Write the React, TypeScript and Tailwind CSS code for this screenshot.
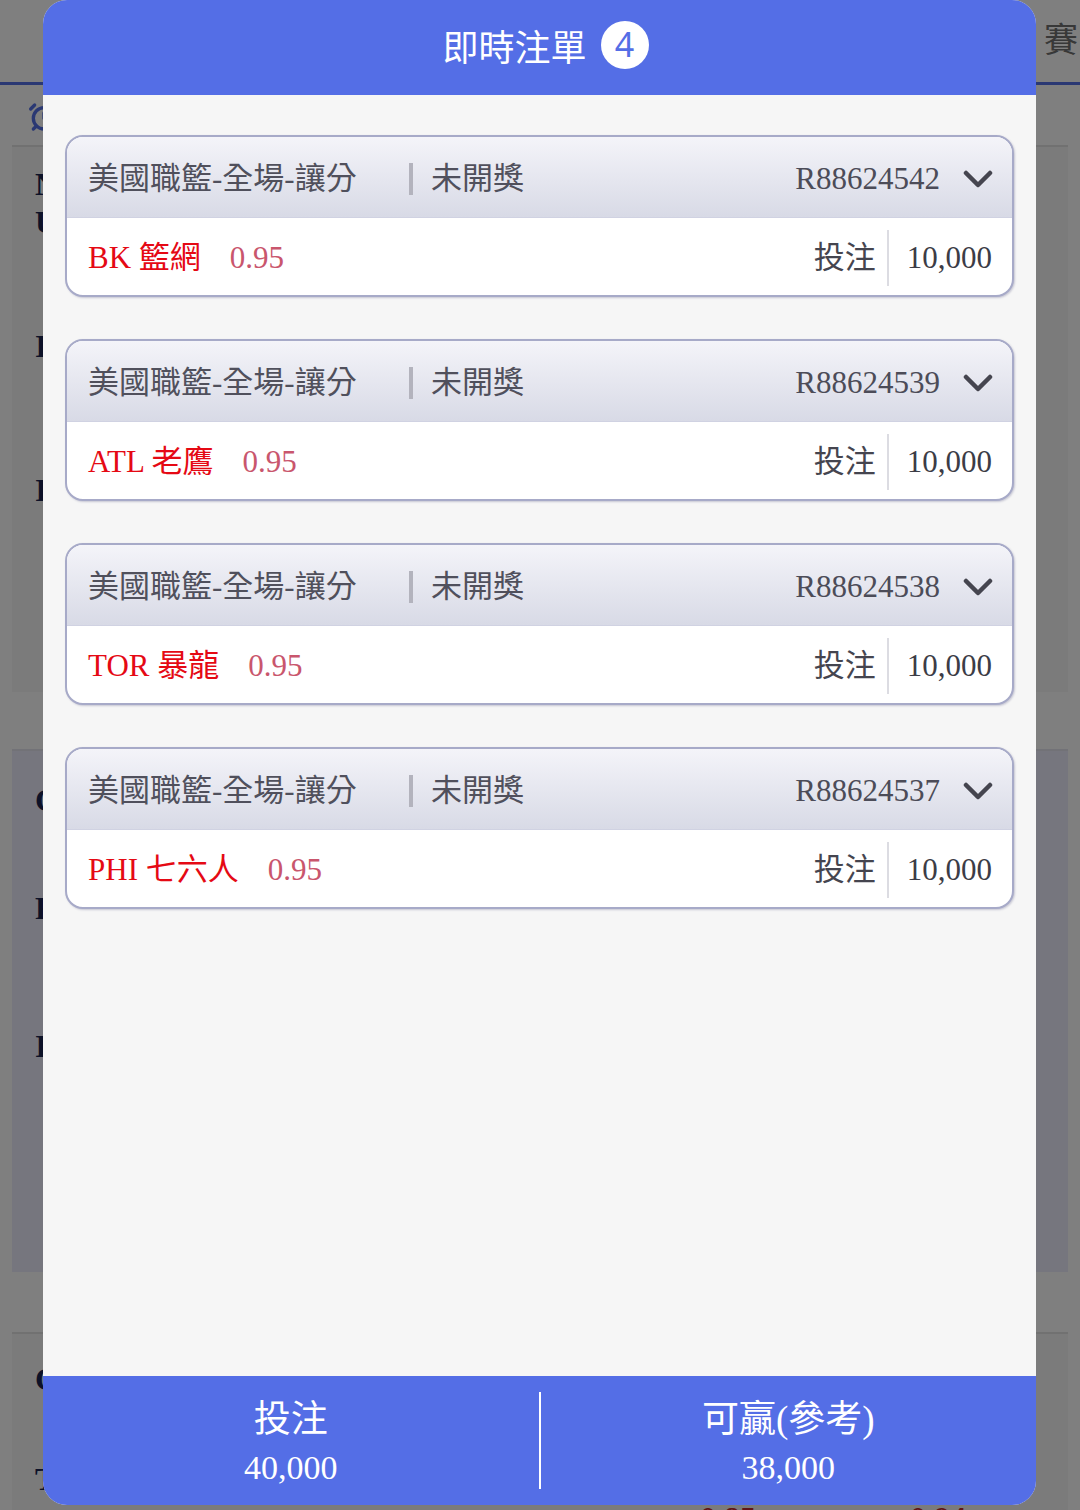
import React from 'react';
import { AlarmClock } from 'lucide-react';

const bets = [
  { id: 'R88624542', team: 'BK 籃網', odds: '0.95' },
  { id: 'R88624539', team: 'ATL 老鷹', odds: '0.95' },
  { id: 'R88624538', team: 'TOR 暴龍', odds: '0.95' },
  { id: 'R88624537', team: 'PHI 七六人', odds: '0.95' },
];

function Chevron() {
  return (
    <svg width="30" height="20" viewBox="0 0 30 20" fill="none">
      <path d="M3 4 L15 16 L27 4" stroke="#45454f" strokeWidth="4.5" strokeLinecap="round" strokeLinejoin="round" />
    </svg>
  );
}

function BetCard({ bet }: { bet: (typeof bets)[number] }) {
  return (
    <div className="rounded-[18px] border-2 border-[#a7aac8] bg-white overflow-hidden shadow-[1px_1px_2px_rgba(60,60,110,0.25)]">
      {/* ticket header */}
      <div className="h-[81px] flex items-center pt-[4px] pl-[21px] pr-[19px] bg-gradient-to-b from-[#f4f4f9] to-[#d8dae6] border-b border-[#d0d2e2] text-[31px] text-[#50505c]">
        <span className="w-[321px]">美國職籃-全場-讓分</span>
        <span className="w-[4px] h-[32px] bg-[#b3b3bd]" />
        <span className="ml-[18px]">未開獎</span>
        <span className="ml-auto text-[#4c4c58]">{bet.id}</span>
        <span className="ml-[23px] flex items-center">
          <Chevron />
        </span>
      </div>
      {/* ticket body */}
      <div className="h-[77px] flex items-center pt-[3px] pl-[21px] pr-[20px] text-[31px]">
        <span className="text-[#e50914]">{bet.team}</span>
        <span className="ml-[29px] text-[#c9566d]">{bet.odds}</span>
        <span className="ml-auto text-[#45454f] pr-[11px]">投注</span>
        <span className="w-[2px] h-[56px] bg-[#dcdce2]" />
        <span className="pl-[18px] text-[#3c3c46]">10,000</span>
      </div>
    </div>
  );
}

export default function App() {
  return (
    <div className="relative w-[1080px] h-[1510px] overflow-hidden bg-white font-['Liberation_Serif','Noto_Sans_CJK_TC',serif]">
      {/* page behind the sheet */}
      <div className="flex flex-col h-full">
        <div className="h-[85px] shrink-0 border-b-[3px] border-[#5570e6] flex justify-end pt-[12px] pr-[2px]">
          <span className="text-[34px] text-[#707070] font-['Noto_Sans_CJK_TC',sans-serif]">賽</span>
        </div>
        <div className="h-[60px] shrink-0 pl-[28px] pt-[16px]">
          <AlarmClock size={32} strokeWidth={2.5} className="text-[#5570e6]" />
        </div>
        <div className="mx-[12px] h-[547px] shrink-0 bg-[#f7f7f7] border-t-2 border-[#e2e2e2] pl-[23px] pt-[18px] text-[32px] font-bold text-[#1b2550] leading-[38px]">
          <div>N</div>
          <div>U</div>
          <div className="mt-[86px]">I</div>
          <div className="mt-[106px]">I</div>
        </div>
        <div className="mx-[12px] mt-[57px] h-[523px] shrink-0 bg-[#ecedfc] border-t-2 border-[#e4e4ee] pl-[23px] pt-[30px] text-[32px] font-bold text-[#1b2550] leading-[38px]">
          <div>C</div>
          <div className="mt-[70px]">F</div>
          <div className="mt-[100px]">I</div>
        </div>
        <div className="mx-[12px] mt-[60px] flex-1 bg-[#f7f7f7] border-t-2 border-[#e2e2e2] pl-[23px] pt-[26px] text-[32px] font-bold text-[#1b2550] leading-[38px]">
          <div>C</div>
          <div className="mt-[62px]">T</div>
          <div className="flex leading-[24px] mt-[8px] pl-[665px] text-[#c0282d]">
            <span>0.85</span>
            <span className="ml-[154px]">0.94</span>
          </div>
        </div>
      </div>

      {/* dim overlay */}
      <div className="absolute inset-0 bg-black/50" />

      {/* bet list sheet */}
      <div className="absolute top-0 left-[43px] w-[993px] h-[1505px] rounded-[24px] overflow-hidden flex flex-col bg-[#f6f6f6]">
        <div className="h-[95px] shrink-0 bg-[#546ee6] flex items-center justify-center pl-[12px] pb-[6px]">
          <span className="text-[36px] text-white font-['Noto_Sans_CJK_TC',sans-serif]">即時注單</span>
          <span className="ml-[14px] w-[48px] h-[48px] rounded-full bg-white flex items-center justify-center text-[34px] text-[#546ee6] font-['Noto_Sans',sans-serif]">
            4
          </span>
        </div>

        <div className="flex-1 flex flex-col gap-[42px] px-[22px] pt-[40px]">
          {bets.map(bet => (
            <BetCard key={bet.id} bet={bet} />
          ))}
        </div>

        <div className="h-[129px] shrink-0 bg-[#546ee6] flex items-center text-white">
          <div className="flex-1 flex flex-col items-center self-stretch pt-[20px]">
            <span className="text-[37px] leading-[48px]">投注</span>
            <span className="text-[34px] leading-[48px]">40,000</span>
          </div>
          <span className="w-[2px] h-[97px] bg-white" />
          <div className="flex-1 flex flex-col items-center self-stretch pt-[20px]">
            <span className="text-[37px] leading-[48px]">可贏(參考)</span>
            <span className="text-[34px] leading-[48px]">38,000</span>
          </div>
        </div>
      </div>
    </div>
  );
}
